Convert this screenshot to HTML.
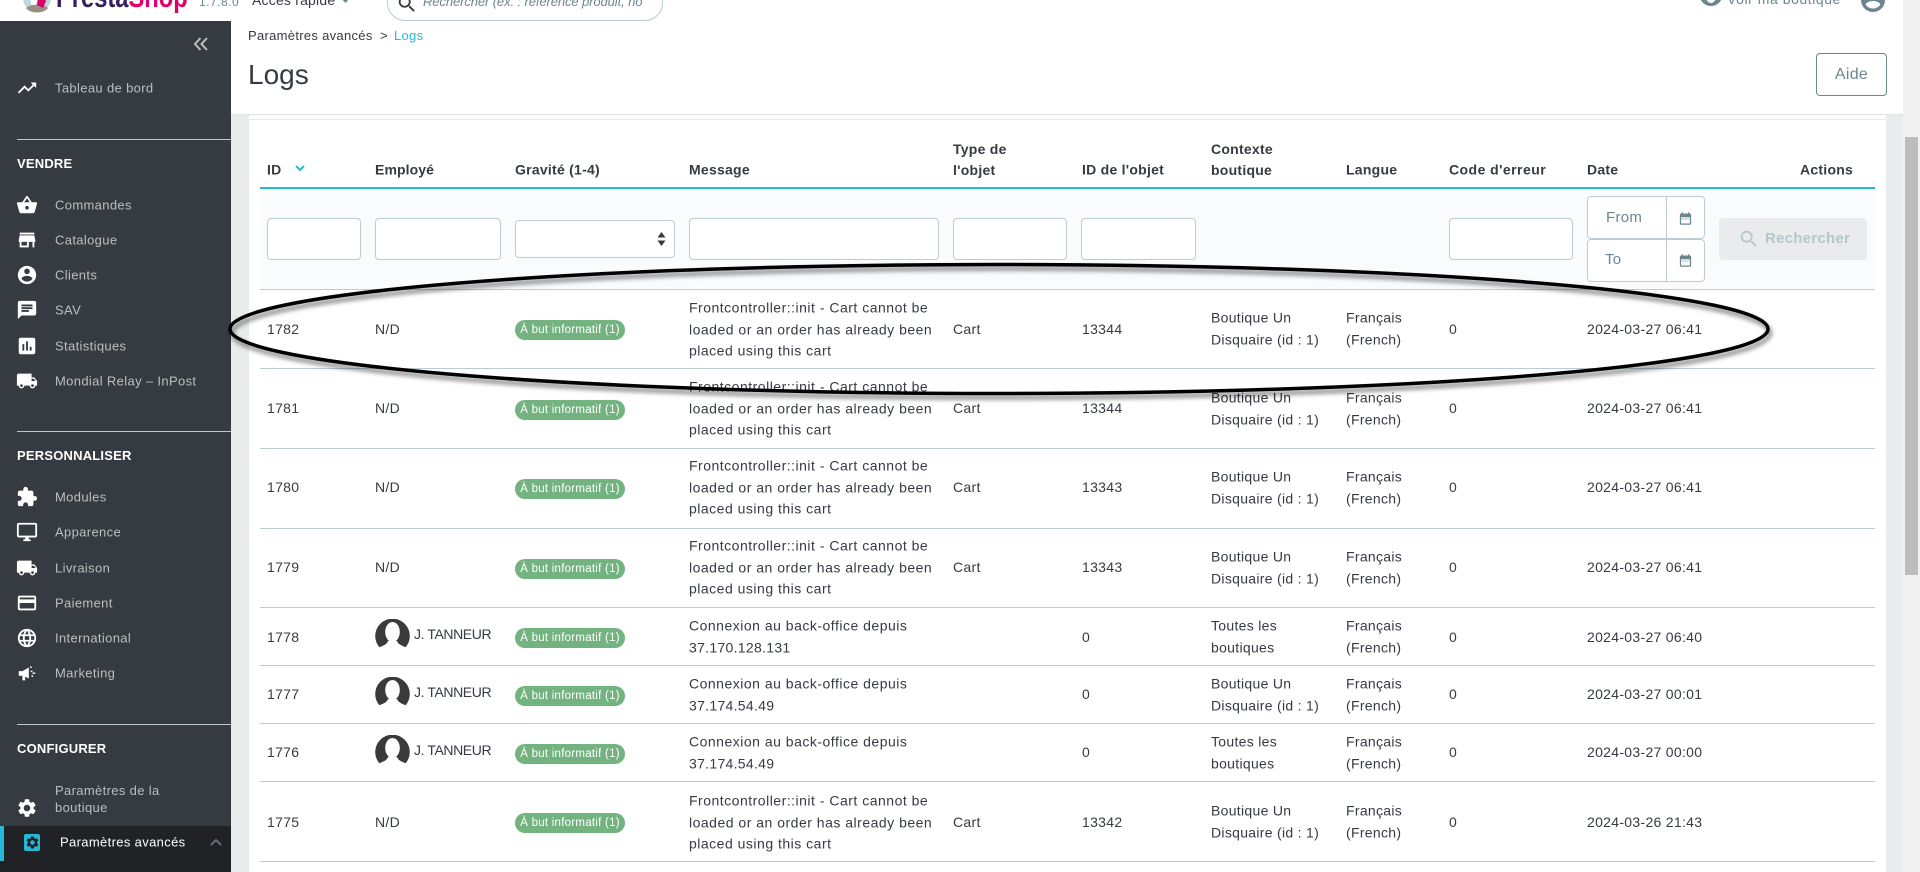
<!DOCTYPE html>
<html lang="fr">
<head>
<meta charset="utf-8">
<title>Logs</title>
<style>
html,body{margin:0;padding:0;width:1920px;height:872px;overflow:hidden;background:#fff;font-family:"Liberation Sans",sans-serif;color:#363a41}
*{box-sizing:border-box}
.a{position:absolute}
.t{position:absolute;white-space:nowrap;transform:translateY(-50%);font-size:14px;line-height:21.6px;letter-spacing:.3px}
.m{letter-spacing:.5px}
.m span{letter-spacing:.3px}
.d{top:1px}
.n{letter-spacing:-.4px}
.s{color:#bebebe;font-size:13px;letter-spacing:.35px;left:55px;line-height:17px}
.h{color:#fff;font-weight:700;font-size:13px;left:17px;letter-spacing:.2px}
.i{position:absolute;left:16px;width:22px;height:22px;fill:#fff;transform:translateY(-50%)}
.th{font-weight:700;font-size:14px;letter-spacing:.25px;line-height:21px}
.in{position:absolute;background:#fff;border:1px solid #bbcdd2;border-radius:4px}
.ln{position:absolute;left:260px;width:1615px;height:1px;background:#bbcdd2}
.r{position:absolute;left:0;width:1920px;height:0}
.b{position:absolute;left:515px;top:-9px;width:110px;height:20px;border-radius:10px;background:#72b37f;color:#fff;font-size:11.5px;line-height:20px;text-align:center;font-weight:400;letter-spacing:.25px;white-space:nowrap}
</style>
</head>
<body>
<svg width="0" height="0" style="position:absolute">
<defs>
<symbol id="truck" viewBox="0 0 24 24"><path d="M20 8h-3V4H3c-1.100 0-2 .9-2 2v11h2c0 1.660 1.340 3 3 3s3-1.340 3-3h6c0 1.660 1.340 3 3 3s3-1.340 3-3h2v-5l-3-4zM6 18.500c-.83 0-1.500-.67-1.500-1.500s.67-1.500 1.500-1.500 1.500.67 1.500 1.500-.67 1.500-1.500 1.500zm13.500-9l1.960 2.500H17V9.500h2.500zm-1.500 9c-.83 0-1.500-.67-1.500-1.500s.67-1.500 1.500-1.500 1.500.67 1.500 1.500-.67 1.500-1.500 1.500z"/></symbol>
<symbol id="gear" viewBox="0 0 24 24"><path d="M19.140 12.940c.04-.3.06-.61.06-.94 0-.32-.02-.64-.07-.94l2.030-1.580c.18-.14.23-.41.12-.61l-1.920-3.320c-.12-.22-.37-.29-.59-.22l-2.390.96c-.5-.38-1.030-.7-1.620-.94l-.36-2.540c-.04-.24-.24-.41-.48-.41h-3.840c-.24 0-.43.17-.47.41l-.36 2.540c-.59.24-1.130.57-1.620.94l-2.390-.96c-.22-.08-.47 0-.59.22L2.740 8.870c-.12.21-.08.47.12.61l2.030 1.580c-.05.3-.09.63-.09.94s.02.64.07.94l-2.030 1.580c-.18.14-.23.41-.12.61l1.920 3.320c.12.22.37.29.59.22l2.390-.96c.5.38 1.030.7 1.620.94l.36 2.540c.05.24.24.41.48.41h3.840c.24 0 .44-.17.47-.41l.36-2.540c.59-.24 1.130-.56 1.620-.94l2.390.96c.22.08.47 0 .59-.22l1.920-3.320c.12-.22.07-.47-.12-.61l-2.010-1.580zM12 15.600c-1.980 0-3.600-1.620-3.600-3.600s1.620-3.600 3.600-3.600 3.600 1.620 3.600 3.600-1.620 3.600-3.600 3.600z"/></symbol>
<symbol id="search" viewBox="0 0 24 24"><path d="M15.500 14h-.79l-.28-.27C15.410 12.590 16 11.110 16 9.500 16 5.910 13.090 3 9.500 3S3 5.910 3 9.500 5.910 16 9.500 16c1.610 0 3.090-.59 4.230-1.570l.27.28v.79l5 4.990L20.490 19l-4.990-5zm-6 0C7.010 14 5 11.990 5 9.500S7.010 5 9.500 5 14 7.010 14 9.500 11.990 14 9.500 14z"/></symbol>
<symbol id="cal" viewBox="0 0 24 24"><path d="M19 4h-1V2h-2v2H8V2H6v2H5c-1.100 0-2 .9-2 2v14c0 1.100.9 2 2 2h14c1.100 0 2-.9 2-2V6c0-1.100-.9-2-2-2zm0 16H5V10h14v10z"/><path d="M7 12h2v1.500H7zM11 12h2v1.500h-2zM15 12h2v1.500h-2z"/></symbol>
<symbol id="av" viewBox="0 0 35 36"><circle cx="17.500" cy="17" r="17.300" fill="#3a3a3a"/><ellipse cx="17.500" cy="13" rx="7.300" ry="10" fill="#fff"/><path d="M2 30c5-4 9-3 11-8h9c2 5 6 4 11 8l-4 6H6z" fill="#fff"/></symbol>
</defs>
</svg>

<!-- top header -->
<svg class="a" style="left:22px;top:-18px" width="30" height="32" viewBox="0 0 30 32"><circle cx="15" cy="16" r="14" fill="#bcd8de"/><path d="M4 26c6-5 16-5 22 0-4 6-18 6-22 0z" fill="#9b8f85"/><path d="M17 10l7 9-3 7-6-3z" fill="#df0067"/><path d="M8 8c3-2 7-2 9 2l-3 13H9z" fill="#fff"/></svg>
<div class="t" style="left:56px;top:-2px;font-size:30px;font-weight:700;letter-spacing:0;line-height:34px;transform:translateY(-50%) scaleX(.79);transform-origin:0 50%"><span style="color:#34215d">Presta</span><span style="color:#df0067">Shop</span></div>
<div class="t" style="left:199px;top:3px;font-size:12px;color:#6c868e;letter-spacing:.5px">1.7.8.0</div>
<div class="t" style="left:252px;top:1px;font-size:14px;color:#363a41;letter-spacing:.2px">Accès rapide</div>
<svg class="a" style="left:341px;top:-2px" width="10" height="6"><path d="M0 0h9L4.500 5z" fill="#6c868e"/></svg>
<div class="a" style="left:387px;top:-20px;width:276px;height:41px;border:1px solid #bbcdd2;border-radius:18px;background:#fff"></div>
<svg class="a" style="left:396px;top:-7px;fill:#363a41" width="22" height="22"><use href="#search"/></svg>
<div class="t" style="left:423px;top:2px;font-size:13px;font-style:italic;color:#6c868e;letter-spacing:-.1px">Rechercher (ex. : référence produit, no</div>
<svg class="a" style="left:1700px;top:-10px" width="22" height="17" viewBox="0 0 22 17"><path d="M11 1C6 1 2 4 0 8.500 2 13 6 16 11 16s9-3 11-7.500C20 4 16 1 11 1zm0 12a4.500 4.500 0 110-9 4.500 4.500 0 010 9z" fill="#6c868e"/></svg>
<div class="t" style="left:1727px;top:0;font-size:14px;color:#6c868e;letter-spacing:.55px">Voir ma boutique</div>
<svg class="a" style="left:1861px;top:-12px;fill:#6c868e" width="24" height="24"><path d="M12 0C5.400 0 0 5.400 0 12s5.400 12 12 12 12-5.400 12-12S18.600 0 12 0zm0 20.500c-3 0-5.700-1.500-7.300-3.900C5 14.200 9.600 13 12 13s7 1.200 7.300 3.600c-1.600 2.400-4.300 3.900-7.300 3.900z"/></svg>

<!-- scrollbar -->
<div class="a" style="left:1903px;top:0;width:17px;height:872px;background:#f1f1f1"></div>
<div class="a" style="left:1905px;top:137px;width:13px;height:438px;background:#bcbcbc"></div>

<!-- sidebar -->
<div class="a" style="left:0;top:21px;width:231px;height:851px;background:#363a41"></div>
<svg class="a" style="left:193px;top:37px" width="16" height="14" fill="none" stroke="#bebebe" stroke-width="2"><path d="M7.500 1L2 7l5.500 6M14 1L8.500 7l5.500 6"/></svg>

<svg class="i" viewBox="0 0 24 24" style="top:88px"><path d="M16 6l2.290 2.290-4.880 4.880-4-4L2 16.590 3.410 18l6-6 4 4 6.300-6.290L22 12V6z"/></svg>
<div class="t s" style="top:88px">Tableau de bord</div>
<div class="a" style="left:17px;top:139px;width:214px;height:1px;background:#bbcdd2"></div>
<div class="t h" style="top:164px">VENDRE</div>

<svg class="i" viewBox="0 0 24 24" style="top:205px"><path d="M17.210 9l-4.380-6.560c-.19-.28-.51-.42-.83-.42-.32 0-.64.140-.83.430L6.790 9H2c-.55 0-1 .45-1 1 0 .09.010.18.040.27l2.540 9.270c.23.84 1 1.460 1.920 1.460h13c.92 0 1.690-.62 1.930-1.460l2.540-9.270L23 10c0-.55-.45-1-1-1h-4.790zM9 9l3-4.400L15 9H9zm3 8c-1.100 0-2-.9-2-2s.9-2 2-2 2 .9 2 2-.9 2-2 2z"/></svg>
<div class="t s" style="top:205px">Commandes</div>
<svg class="i" viewBox="0 0 24 24" style="top:240px"><path d="M20 4H4v2h16V4zm1 10v-2l-1-5H4l-1 5v2h1v6h10v-6h4v6h2v-6h1zm-9 4H6v-4h6v4z"/></svg>
<div class="t s" style="top:240px">Catalogue</div>
<svg class="i" viewBox="0 0 24 24" style="top:275px"><path d="M12 2C6.480 2 2 6.480 2 12s4.480 10 10 10 10-4.480 10-10S17.520 2 12 2zm0 3c1.660 0 3 1.340 3 3s-1.340 3-3 3-3-1.340-3-3 1.340-3 3-3zm0 14.200c-2.500 0-4.710-1.280-6-3.220.03-1.990 4-3.080 6-3.080 1.990 0 5.970 1.090 6 3.080-1.290 1.940-3.500 3.220-6 3.220z"/></svg>
<div class="t s" style="top:275px">Clients</div>
<svg class="i" viewBox="0 0 24 24" style="top:310px"><path d="M20 2H4c-1.100 0-1.990.9-1.990 2L2 22l4-4h14c1.100 0 2-.9 2-2V4c0-1.100-.9-2-2-2zM6 9h12v2H6V9zm8 5H6v-2h8v2zm4-6H6V6h12v2z"/></svg>
<div class="t s" style="top:310px">SAV</div>
<svg class="i" viewBox="0 0 24 24" style="top:346px"><path d="M19 3H5c-1.100 0-2 .9-2 2v14c0 1.100.9 2 2 2h14c1.100 0 2-.9 2-2V5c0-1.100-.9-2-2-2zM9 17H7v-7h2v7zm4 0h-2V7h2v10zm4 0h-2v-4h2v4z"/></svg>
<div class="t s" style="top:346px">Statistiques</div>
<svg class="i" style="top:381px"><use href="#truck"/></svg>
<div class="t s" style="top:381px">Mondial Relay – InPost</div>

<div class="a" style="left:17px;top:431px;width:214px;height:1px;background:#bbcdd2"></div>
<div class="t h" style="top:456px">PERSONNALISER</div>

<svg class="i" viewBox="0 0 24 24" style="top:497px"><path d="M20.500 11H19V7c0-1.100-.9-2-2-2h-4V3.500C13 2.120 11.880 1 10.500 1S8 2.120 8 3.500V5H4c-1.100 0-1.990.9-1.990 2v3.800H3.500c1.490 0 2.700 1.210 2.700 2.700s-1.210 2.700-2.700 2.700H2V20c0 1.100.9 2 2 2h3.800v-1.500c0-1.490 1.210-2.700 2.700-2.700 1.490 0 2.700 1.210 2.700 2.700V22H17c1.100 0 2-.9 2-2v-4h1.500c1.380 0 2.500-1.120 2.500-2.500S21.880 11 20.500 11z"/></svg>
<div class="t s" style="top:497px">Modules</div>
<svg class="i" viewBox="0 0 24 24" style="top:532px"><path d="M21 2H3c-1.100 0-2 .9-2 2v12c0 1.100.9 2 2 2h7v2H8v2h8v-2h-2v-2h7c1.100 0 2-.9 2-2V4c0-1.100-.9-2-2-2zm0 14H3V4h18v12z"/></svg>
<div class="t s" style="top:532px">Apparence</div>
<svg class="i" style="top:568px"><use href="#truck"/></svg>
<div class="t s" style="top:568px">Livraison</div>
<svg class="i" viewBox="0 0 24 24" style="top:603px"><path d="M20 4H4c-1.110 0-1.990.89-1.990 2L2 18c0 1.110.89 2 2 2h16c1.110 0 2-.89 2-2V6c0-1.110-.89-2-2-2zm0 14H4v-6h16v6zm0-10H4V6h16v2z"/></svg>
<div class="t s" style="top:603px">Paiement</div>
<svg class="i" viewBox="0 0 24 24" style="top:638px"><path d="M11.990 2C6.470 2 2 6.480 2 12s4.470 10 9.990 10C17.520 22 22 17.520 22 12S17.520 2 11.990 2zm6.930 6h-2.950c-.32-1.250-.78-2.450-1.380-3.560 1.840.63 3.370 1.910 4.330 3.560zM12 4.040c.83 1.200 1.480 2.530 1.910 3.960h-3.820c.43-1.430 1.080-2.760 1.910-3.960zM4.260 14C4.100 13.360 4 12.690 4 12s.1-1.360.26-2h3.380c-.08.66-.14 1.320-.14 2 0 .68.06 1.340.14 2H4.260zm.82 2h2.950c.32 1.250.78 2.450 1.380 3.560-1.840-.63-3.370-1.900-4.330-3.560zm2.950-8H5.080c.96-1.660 2.490-2.930 4.330-3.560C8.810 5.550 8.350 6.750 8.030 8zM12 19.960c-.83-1.200-1.480-2.530-1.910-3.960h3.820c-.43 1.430-1.080 2.760-1.910 3.960zM14.340 14H9.660c-.09-.66-.16-1.320-.16-2 0-.68.07-1.350.16-2h4.680c.09.65.16 1.320.16 2 0 .68-.07 1.340-.16 2zm.25 5.560c.6-1.110 1.060-2.310 1.380-3.560h2.950c-.96 1.650-2.490 2.930-4.330 3.560zM16.360 14c.08-.66.14-1.320.14-2 0-.68-.06-1.340-.14-2h3.380c.16.64.26 1.310.26 2s-.1 1.360-.26 2h-3.380z"/></svg>
<div class="t s" style="top:638px">International</div>
<svg class="i" viewBox="0 0 24 24" style="top:673px"><path d="M3 10h4l7-4v12l-4-2v4H7v-5H3z"/><path d="M16 9.500h2v1.500h-2zM18 11.500h3v1.500h-3zM16 4.500l1.500 1-1 1.300-1.500-1zM16.500 15l1.500-.8 1 1.500-1.500.8z"/></svg>
<div class="t s" style="top:673px">Marketing</div>

<div class="a" style="left:17px;top:724px;width:214px;height:1px;background:#bbcdd2"></div>
<div class="t h" style="top:749px">CONFIGURER</div>

<svg class="i" style="top:808px"><use href="#gear"/></svg>
<div class="t s" style="top:799px">Paramètres de la<br>boutique</div>

<div class="a" style="left:0;top:826px;width:231px;height:46px;background:#202226"></div>
<div class="a" style="left:0;top:826px;width:4px;height:35px;background:#25b9d7"></div>
<div class="a" style="left:24px;top:834px;width:16px;height:17px;background:#25b9d7;border-radius:2px"></div>
<svg class="a" style="left:25px;top:835px;fill:#202226" width="15" height="15"><use href="#gear"/></svg>
<div class="t s" style="top:842px;left:60px;color:#fff">Paramètres avancés</div>
<svg class="a" style="left:210px;top:838px" width="12" height="8" fill="none" stroke="#5d7379" stroke-width="2"><path d="M1 7l5-5 5 5"/></svg>

<!-- page header -->
<div class="t" style="left:248px;top:36px;font-size:13px;letter-spacing:.3px">Paramètres avancés</div>
<div class="t" style="left:380px;top:36px;font-size:13px">&gt;</div>
<div class="t" style="left:394px;top:36px;font-size:13px;color:#25b9d7;letter-spacing:.3px">Logs</div>
<div class="t" style="left:248px;top:75px;font-size:28px;line-height:36px;letter-spacing:0">Logs</div>
<div class="a" style="left:1816px;top:53px;width:71px;height:43px;border:1px solid #6c868e;border-radius:4px;color:#6c868e;font-size:16px;line-height:41px;text-align:center;letter-spacing:.3px">Aide</div>

<!-- content background -->
<div class="a" style="left:231px;top:114px;width:1672px;height:758px;background:#eaebec;border-top:1px solid #dfe1e2"></div>
<div class="a" style="left:249px;top:115px;width:1637px;height:757px;background:#fff"></div>
<div class="a" style="left:249px;top:119px;width:1637px;height:1px;background:#e3eaec"></div>

<!-- table head -->
<div class="t th" style="left:267px;top:170px">ID</div>
<svg class="a" style="left:295px;top:165px" width="10" height="7" fill="none" stroke="#25b9d7" stroke-width="2"><path d="M1 1l4 4 4-4"/></svg>
<div class="t th" style="left:375px;top:170px;letter-spacing:.1px">Employé</div>
<div class="t th" style="left:515px;top:170px">Gravité (1-4)</div>
<div class="t th" style="left:689px;top:170px">Message</div>
<div class="t th" style="left:953px;top:159.500px">Type de<br>l'objet</div>
<div class="t th" style="left:1082px;top:170px">ID de l'objet</div>
<div class="t th" style="left:1211px;top:159.500px">Contexte<br>boutique</div>
<div class="t th" style="left:1346px;top:170px">Langue</div>
<div class="t th" style="left:1449px;top:170px;letter-spacing:.45px">Code d'erreur</div>
<div class="t th" style="left:1587px;top:170px">Date</div>
<div class="t th" style="left:1800px;top:170px">Actions</div>
<div class="a" style="left:260px;top:187px;width:1615px;height:2px;background:#25b9d7"></div>

<!-- filter row -->
<div class="a" style="left:260px;top:189px;width:1615px;height:100px;background:#fafbfc"></div>
<div class="in" style="left:267px;top:218px;width:94px;height:42px"></div>
<div class="in" style="left:375px;top:218px;width:126px;height:42px"></div>
<div class="in" style="left:515px;top:220px;width:160px;height:38px"></div>
<svg class="a" style="left:657px;top:232px" width="9" height="14"><path d="M4.500 0L8.500 5.500H.5zM4.500 14L.5 8.500h8z" fill="#363a41"/></svg>
<div class="in" style="left:689px;top:218px;width:250px;height:42px"></div>
<div class="in" style="left:953px;top:218px;width:114px;height:42px"></div>
<div class="in" style="left:1081px;top:218px;width:115px;height:42px"></div>
<div class="in" style="left:1449px;top:218px;width:124px;height:42px"></div>
<div class="in" style="left:1587px;top:196px;width:118px;height:43px"></div>
<div class="in" style="left:1587px;top:239px;width:118px;height:43px"></div>
<div class="a" style="left:1666px;top:196px;width:1px;height:86px;background:#bbcdd2"></div>
<div class="t" style="left:1606px;top:218px;font-size:15px;color:#6c868e">From</div>
<div class="t" style="left:1605px;top:260px;font-size:15px;color:#6c868e">To</div>
<svg class="a" style="left:1678px;top:211px;fill:#6c868e" width="15" height="15"><use href="#cal"/></svg>
<svg class="a" style="left:1678px;top:253px;fill:#6c868e" width="15" height="15"><use href="#cal"/></svg>
<div class="a" style="left:1719px;top:218px;width:148px;height:42px;background:#eaebec;border-radius:4px"></div>
<svg class="a" style="left:1738px;top:228px;fill:#b3c7cd" width="22" height="22"><use href="#search"/></svg>
<div class="t" style="left:1765px;top:239px;font-size:15px;font-weight:700;color:#b3c7cd;letter-spacing:.25px">Rechercher</div>

<!-- row lines -->
<div class="ln" style="top:289px"></div>
<div class="ln" style="top:368px"></div>
<div class="ln" style="top:448px"></div>
<div class="ln" style="top:528px"></div>
<div class="ln" style="top:607px"></div>
<div class="ln" style="top:665px"></div>
<div class="ln" style="top:723px"></div>
<div class="ln" style="top:781px"></div>
<div class="ln" style="top:861px"></div>

<!-- rows -->
<div class="r" style="top:329px">
<div class="t d" style="left:267px">1782</div><div class="t d" style="left:375px">N/D</div><div class="b">À but informatif (1)</div>
<div class="t m d" style="left:689px">Frontcontroller::init - Cart cannot be<br>loaded or an order has already been<br>placed using this cart</div>
<div class="t d" style="left:953px">Cart</div><div class="t d" style="left:1082px">13344</div>
<div class="t" style="left:1211px">Boutique Un<br>Disquaire (id : 1)</div><div class="t" style="left:1346px">Français<br>(French)</div>
<div class="t d" style="left:1449px">0</div><div class="t d" style="left:1587px">2024-03-27 06:41</div>
</div>
<div class="r" style="top:409px">
<div class="t" style="left:267px">1781</div><div class="t" style="left:375px">N/D</div><div class="b">À but informatif (1)</div>
<div class="t m" style="left:689px">Frontcontroller::init - Cart cannot be<br>loaded or an order has already been<br>placed using this cart</div>
<div class="t" style="left:953px">Cart</div><div class="t" style="left:1082px">13344</div>
<div class="t" style="left:1211px">Boutique Un<br>Disquaire (id : 1)</div><div class="t" style="left:1346px">Français<br>(French)</div>
<div class="t" style="left:1449px">0</div><div class="t" style="left:1587px">2024-03-27 06:41</div>
</div>
<div class="r" style="top:488px">
<div class="t" style="left:267px">1780</div><div class="t" style="left:375px">N/D</div><div class="b">À but informatif (1)</div>
<div class="t m" style="left:689px">Frontcontroller::init - Cart cannot be<br>loaded or an order has already been<br>placed using this cart</div>
<div class="t" style="left:953px">Cart</div><div class="t" style="left:1082px">13343</div>
<div class="t" style="left:1211px">Boutique Un<br>Disquaire (id : 1)</div><div class="t" style="left:1346px">Français<br>(French)</div>
<div class="t" style="left:1449px">0</div><div class="t" style="left:1587px">2024-03-27 06:41</div>
</div>
<div class="r" style="top:568px">
<div class="t" style="left:267px">1779</div><div class="t" style="left:375px">N/D</div><div class="b">À but informatif (1)</div>
<div class="t m" style="left:689px">Frontcontroller::init - Cart cannot be<br>loaded or an order has already been<br>placed using this cart</div>
<div class="t" style="left:953px">Cart</div><div class="t" style="left:1082px">13343</div>
<div class="t" style="left:1211px">Boutique Un<br>Disquaire (id : 1)</div><div class="t" style="left:1346px">Français<br>(French)</div>
<div class="t" style="left:1449px">0</div><div class="t" style="left:1587px">2024-03-27 06:41</div>
</div>
<div class="r" style="top:637px">
<div class="t d" style="left:267px">1778</div><svg class="a" style="left:375px;top:-18px" width="35" height="36"><use href="#av"/></svg><div class="t n" style="left:414px;top:-2px">J. TANNEUR</div><div class="b">À but informatif (1)</div>
<div class="t m" style="left:689px">Connexion au back-office depuis<br><span>37.170.128.131</span></div>
<div class="t d" style="left:1082px">0</div>
<div class="t" style="left:1211px">Toutes les<br>boutiques</div><div class="t" style="left:1346px">Français<br>(French)</div>
<div class="t d" style="left:1449px">0</div><div class="t d" style="left:1587px">2024-03-27 06:40</div>
</div>
<div class="r" style="top:695px">
<div class="t" style="left:267px">1777</div><svg class="a" style="left:375px;top:-18px" width="35" height="36"><use href="#av"/></svg><div class="t n" style="left:414px;top:-2px">J. TANNEUR</div><div class="b">À but informatif (1)</div>
<div class="t m" style="left:689px">Connexion au back-office depuis<br><span>37.174.54.49</span></div>
<div class="t" style="left:1082px">0</div>
<div class="t" style="left:1211px">Boutique Un<br>Disquaire (id : 1)</div><div class="t" style="left:1346px">Français<br>(French)</div>
<div class="t" style="left:1449px">0</div><div class="t" style="left:1587px">2024-03-27 00:01</div>
</div>
<div class="r" style="top:753px">
<div class="t" style="left:267px">1776</div><svg class="a" style="left:375px;top:-18px" width="35" height="36"><use href="#av"/></svg><div class="t n" style="left:414px;top:-2px">J. TANNEUR</div><div class="b">À but informatif (1)</div>
<div class="t m" style="left:689px">Connexion au back-office depuis<br><span>37.174.54.49</span></div>
<div class="t" style="left:1082px">0</div>
<div class="t" style="left:1211px">Toutes les<br>boutiques</div><div class="t" style="left:1346px">Français<br>(French)</div>
<div class="t" style="left:1449px">0</div><div class="t" style="left:1587px">2024-03-27 00:00</div>
</div>
<div class="r" style="top:822px">
<div class="t d" style="left:267px">1775</div><div class="t d" style="left:375px">N/D</div><div class="b">À but informatif (1)</div>
<div class="t m d" style="left:689px">Frontcontroller::init - Cart cannot be<br>loaded or an order has already been<br>placed using this cart</div>
<div class="t d" style="left:953px">Cart</div><div class="t d" style="left:1082px">13342</div>
<div class="t" style="left:1211px">Boutique Un<br>Disquaire (id : 1)</div><div class="t" style="left:1346px">Français<br>(French)</div>
<div class="t d" style="left:1449px">0</div><div class="t d" style="left:1587px">2024-03-26 21:43</div>
</div>

<!-- hand-drawn ellipse -->
<svg class="a" style="left:0;top:0;pointer-events:none" width="1920" height="872">
<defs><filter id="sh" x="-5%" y="-20%" width="110%" height="150%"><feDropShadow dx="2" dy="4" stdDeviation="2.500" flood-color="#000" flood-opacity=".55"/></filter></defs>
<ellipse cx="999" cy="329" rx="769" ry="64.500" fill="none" stroke="#000" stroke-width="3.500" filter="url(#sh)"/>
</svg>
</body>
</html>
